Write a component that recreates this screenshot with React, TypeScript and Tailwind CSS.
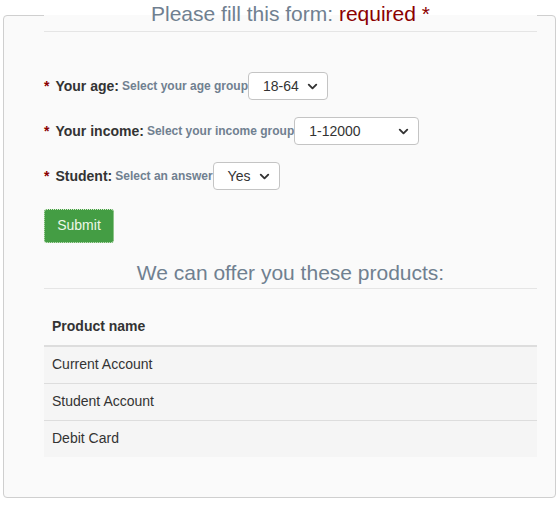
import { ChevronDown } from "lucide-react";

const questions = [
  { label: "Your age:", help: "Select your age group", value: "18-64", width: "w-[80px]" },
  { label: "Your income:", help: "Select your income group", value: "1-12000", width: "w-[125px]" },
  { label: "Student:", help: "Select an answer", value: "Yes", width: "w-[67px]" },
];

const products = ["Current Account", "Student Account", "Debit Card"];

function FakeSelect({ value, width }: { value: string; width: string }) {
  return (
    <div
      className={`${width} flex h-[28px] items-center justify-between rounded-[4px] border border-[#c4c4c4] bg-white pl-[14px] pr-[7px] text-[14px] text-[#333]`}
    >
      <span>{value}</span>
      <ChevronDown size={15} strokeWidth={3} className="text-[#333]" />
    </div>
  );
}

export default function App() {
  return (
    <div className="min-h-[505px] bg-white font-['Liberation_Sans',Arial,sans-serif] text-[14px] text-[#333]">
      <fieldset className="-mt-[1px] ml-[3px] w-[553px] rounded-[4px] border border-[#cfcfcf] bg-[#fafafa] pb-[40px] pl-[40px] pr-[18px]">
        <legend className="w-full border-b border-[#e5e5e5] pb-[2px] text-center text-[21px] leading-[30px] text-[#708090]">
          Please fill this form: <span className="text-[#8b0000]">required *</span>
        </legend>

        <div className="mt-[40px] flex flex-col gap-[17px]">
          {questions.map((q) => (
            <div key={q.label} className="flex h-[28px] items-center">
              <span className="font-bold text-[#8b0000]">*</span>
              <span className="ml-[6px] font-bold">{q.label}</span>
              <span className="ml-[3px] text-[12px] font-bold text-[#708090]">{q.help}</span>
              <FakeSelect value={q.value} width={q.width} />
            </div>
          ))}
        </div>

        <button className="mt-[19px] h-[34px] w-[70px] rounded-[3px] border border-dotted border-[#d5ebcc] bg-[#449d44] pb-[2px] text-[14px] text-[#eef8e8]">
          Submit
        </button>

        <h3 className="mt-[15px] border-b border-[#e5e5e5] pb-[1px] text-center text-[21px] leading-[29px] text-[#708090]">
          We can offer you these products:
        </h3>

        <table className="mt-[20px] w-full border-collapse text-left">
          <thead>
            <tr className="border-b-2 border-[#dddddd]">
              <th className="pb-[9px] pl-[8px] pt-[7px] leading-[20px] font-bold">Product name</th>
            </tr>
          </thead>
          <tbody>
            {products.map((p, i) => (
              <tr key={p} className={`bg-[#f5f5f5] ${i > 0 ? "border-t border-[#dddddd]" : ""}`}>
                <td className="pb-[9px] pl-[8px] pt-[7px] leading-[20px]">{p}</td>
              </tr>
            ))}
          </tbody>
        </table>
      </fieldset>
    </div>
  );
}
